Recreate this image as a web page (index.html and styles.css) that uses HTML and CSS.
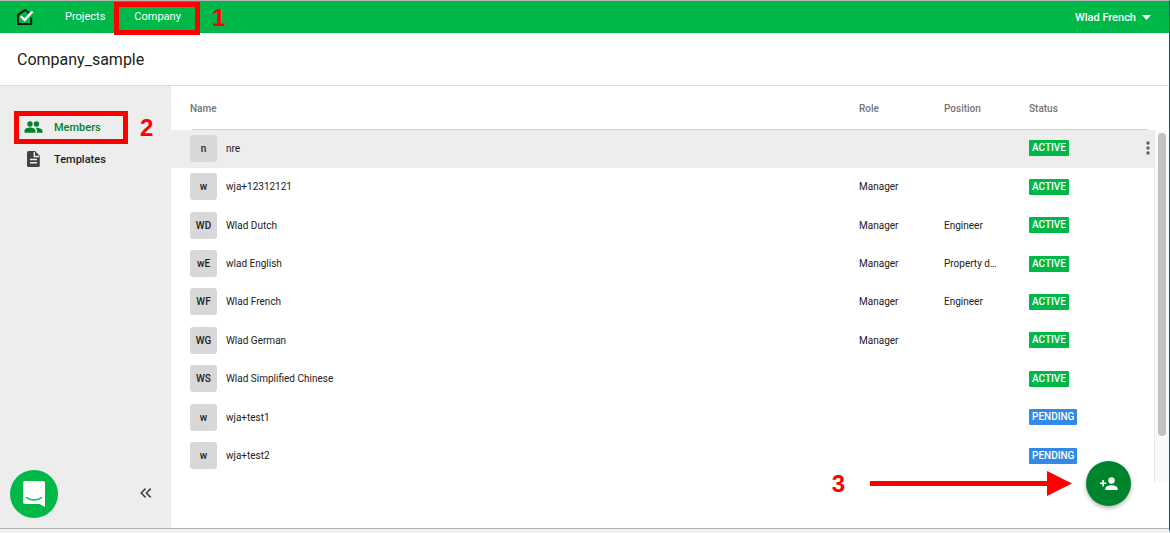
FILE: index.html
```html
<!DOCTYPE html>
<html lang="en">
<head>
    <meta charset="UTF-8" />
    <meta name="viewport" content="width=device-width, initial-scale=1.0" />
    <title>Company_sample - Members</title>
    <link rel="stylesheet" href="styles.css">
</head>
<body>
    <header class="topbar">
        <a class="logo" href="#" aria-label="Home">
            <svg width="18" height="18" viewBox="0 0 18 18" fill="none">
                <path d="M13 5 9.200 2 2 6.800V16H15.200V9.500" stroke="#0b1a10" stroke-width="2" />
                <path d="M4.800 8.300 8.600 12 16.500 3.500" stroke="#fff" stroke-width="2.300" />
            </svg>
        </a>
        <nav class="topnav">
            <a href="#">Projects</a>
            <a class="marked" href="#">Company<span class="step">1</span></a>
        </nav>
        <button class="user-menu" type="button">
            Wlad French
            <svg width="9" height="5" viewBox="0 0 9 5"><path d="M0 0H9L4.500 5Z" fill="#fff" /></svg>
        </button>
    </header>

    <div class="company-bar">
        <h1>Company_sample</h1>
    </div>

    <div class="content">
        <aside class="sidebar">
            <nav class="sidenav">
                <a class="active marked" href="#">
                    <svg width="24" height="18" viewBox="0 0 24 18" fill="currentColor">
                        <circle cx="8" cy="6" r="2.700" />
                        <circle cx="14.500" cy="6" r="2.700" />
                        <path d="M2.500 14.800v-2c0-2 3.400-3.200 5.500-3.200s5.500 1.200 5.500 3.200v2z" />
                        <path d="M14.200 9.700c2.600.1 6.300 1.200 6.300 3.100v2h-5.500v-2c0-1.300-.5-2.300-1.400-3z" />
                    </svg>
                    Members
                    <span class="step">2</span>
                </a>
                <a href="#">
                    <svg width="24" height="18" viewBox="0 0 24 18">
                        <path d="M6.500 1h6.500l4.800 4.800V15.500a1.500 1.500 0 0 1-1.500 1.500H6.500a1.500 1.500 0 0 1-1.500-1.500V2.500A1.500 1.500 0 0 1 6.500 1z" fill="#424242" />
                        <path d="M12.300 2v4.500H17M8 9.500h7M8 12.800h7" stroke="#ededed" stroke-width="1.400" fill="none" />
                    </svg>
                    Templates
                </a>
            </nav>
            <div class="sidebar-bottom">
                <button class="chat" type="button" aria-label="Open chat">
                    <svg width="24" height="28" viewBox="0 0 24 28">
                        <path d="M3 1H21a2 2 0 0 1 2 2V27L17.500 24H3a2 2 0 0 1-2-2V3a2 2 0 0 1 2-2z" fill="#fff" />
                        <path d="M4.500 17.500c4 3.400 11 3.400 15 0" stroke="#00b848" stroke-width="1.500" stroke-linecap="round" fill="none" />
                    </svg>
                </button>
                <button class="collapse" type="button" aria-label="Collapse sidebar">
                    <svg width="12" height="10" viewBox="0 0 12 10"><path d="M5.500 .6 1.200 5l4.300 4.400M10.700 .6 6.400 5l4.300 4.400" stroke="#424242" stroke-width="1.600" fill="none" /></svg>
                </button>
            </div>
        </aside>

        <main class="members">
            <table>
                <thead>
                    <tr>
                        <th class="col-name">Name</th>
                        <th class="col-role">Role</th>
                        <th class="col-position">Position</th>
                        <th class="col-status">Status</th>
                        <th class="col-menu"></th>
                    </tr>
                </thead>
                <tbody>
                    <tr class="hovered">
                        <td><div class="member"><span class="avatar">n</span>nre</div></td>
                        <td></td>
                        <td></td>
                        <td><span class="badge">ACTIVE</span></td>
                        <td>
                            <button class="more" type="button" aria-label="More">
                                <svg width="4" height="14" viewBox="0 0 4 14" fill="#616161"><circle cx="2" cy="2" r="1.700" /><circle cx="2" cy="7" r="1.700" /><circle cx="2" cy="12" r="1.700" /></svg>
                            </button>
                        </td>
                    </tr>
                    <tr>
                        <td><div class="member"><span class="avatar">w</span>wja+12312121</div></td>
                        <td>Manager</td>
                        <td></td>
                        <td><span class="badge">ACTIVE</span></td>
                        <td></td>
                    </tr>
                    <tr>
                        <td><div class="member"><span class="avatar">WD</span>Wlad Dutch</div></td>
                        <td>Manager</td>
                        <td>Engineer</td>
                        <td><span class="badge">ACTIVE</span></td>
                        <td></td>
                    </tr>
                    <tr>
                        <td><div class="member"><span class="avatar">wE</span>wlad English</div></td>
                        <td>Manager</td>
                        <td>Property d…</td>
                        <td><span class="badge">ACTIVE</span></td>
                        <td></td>
                    </tr>
                    <tr>
                        <td><div class="member"><span class="avatar">WF</span>Wlad French</div></td>
                        <td>Manager</td>
                        <td>Engineer</td>
                        <td><span class="badge">ACTIVE</span></td>
                        <td></td>
                    </tr>
                    <tr>
                        <td><div class="member"><span class="avatar">WG</span>Wlad German</div></td>
                        <td>Manager</td>
                        <td></td>
                        <td><span class="badge">ACTIVE</span></td>
                        <td></td>
                    </tr>
                    <tr>
                        <td><div class="member"><span class="avatar">WS</span>Wlad Simplified Chinese</div></td>
                        <td></td>
                        <td></td>
                        <td><span class="badge">ACTIVE</span></td>
                        <td></td>
                    </tr>
                    <tr>
                        <td><div class="member"><span class="avatar">w</span>wja+test1</div></td>
                        <td></td>
                        <td></td>
                        <td><span class="badge pending">PENDING</span></td>
                        <td></td>
                    </tr>
                    <tr>
                        <td><div class="member"><span class="avatar">w</span>wja+test2</div></td>
                        <td></td>
                        <td></td>
                        <td><span class="badge pending">PENDING</span></td>
                        <td></td>
                    </tr>
                </tbody>
            </table>
            <div class="scroll-track"><div class="scroll-thumb"></div></div>

            <div class="add-area">
                <span class="step">3</span>
                <svg class="arrow" width="202" height="26" viewBox="0 0 202 26" fill="#f00">
                    <path d="M0 10H177V0L202 12.500 177 25V15H0z" />
                </svg>
                <button class="add-member" type="button" aria-label="Add member">
                    <svg width="20" height="16" viewBox="0 0 20 16" fill="#fff">
                        <path d="M3.300 4h1.600v2.400H7.200V8H4.900v2.400H3.300V8H1V6.400h2.300z" />
                        <circle cx="12.500" cy="4.500" r="3.200" />
                        <path d="M6.300 14v-1.600c0-2.100 4.100-3.200 6.200-3.200s6.200 1.100 6.200 3.200V14z" />
                    </svg>
                </button>
            </div>
        </main>
    </div>
</body>
</html>
```
FILE: styles.css
```css
* {
    box-sizing: border-box;
}

body {
    margin: 0;
    min-height: 100vh;
    display: flex;
    flex-direction: column;
    font-family: Roboto, sans-serif;
    font-size: 11px;
    color: #212121;
    background-color: #fff;
    border-top: 1px solid #b5b5b5;
    border-right: 1px solid #2d4a7a;
    border-bottom: 4px solid #f1f0f1;
}

a {
    color: inherit;
    text-decoration: none;
}

button {
    font: inherit;
    color: inherit;
    background: none;
    border: 0;
    padding: 0;
}

svg {
    display: block;
    flex-shrink: 0;
}

.topbar {
    display: flex;
    align-items: center;
    height: 32px;
    padding: 0 18px 0 16px;
    background-color: #00b848;
    color: #fff;
}

.topnav {
    display: flex;
    align-self: stretch;
    gap: 9px;
    margin-left: 31px;
}

.topnav a {
    display: flex;
    align-items: center;
    padding-bottom: 1px;
}

.topnav .marked {
    padding-left: 20px;
    padding-right: 19px;
}

.user-menu {
    display: flex;
    align-items: center;
    gap: 6px;
    margin-left: auto;
    font-weight: 500;
}

/* red callouts of the guide */
.marked {
    position: relative;
}

.marked::before {
    content: "";
    position: absolute;
    inset: 0 0 -1px;
    border: 5px solid #f00;
}

.topnav .marked::before {
    inset: 1px 0 -2px;
}

.step {
    color: #f00;
    font: bold 24px/28px "Liberation Sans", Arial, sans-serif;
}

.marked .step {
    position: absolute;
    top: 3px;
    left: 100%;
    margin-left: 12px;
}

.company-bar {
    display: flex;
    align-items: center;
    height: 53px;
    padding-left: 17px;
    border-bottom: 1px solid #dcdcdc;
}

.company-bar h1 {
    margin: 0;
    font-size: 16px;
    font-weight: 400;
}

.content {
    flex: 1;
    display: flex;
    border-bottom: 1px solid #b0b0b0;
}

.sidebar {
    display: flex;
    flex-direction: column;
    justify-content: space-between;
    width: 171px;
    padding: 25px 0 10px;
    background-color: #ededed;
}

.sidenav a {
    display: flex;
    align-items: center;
    gap: 8px;
    width: 114px;
    height: 32px;
    margin-left: 14px;
    padding-left: 8px;
    font-weight: 500;
}

.sidenav .active {
    color: #00832d;
}

.sidebar-bottom {
    display: flex;
    align-items: center;
    justify-content: space-between;
    padding: 0 19px 0 10px;
}

.chat {
    display: grid;
    place-items: center;
    width: 48px;
    height: 48px;
    border-radius: 50%;
    background-color: #00b848;
}

.collapse {
    padding-bottom: 3px;
}

.members {
    position: relative;
    flex: 1;
    display: flex;
    align-items: flex-start;
}

table {
    flex: 1;
    height: 390px;
    table-layout: fixed;
    border-collapse: collapse;
    font-size: 10px;
}

thead tr {
    background: linear-gradient(#d0d0d0, #d0d0d0) 21px 100% / calc(100% - 27px) 1px no-repeat;
}

th {
    height: 44px;
    padding: 0;
    font-weight: 500;
    color: #757575;
    text-align: left;
}

td {
    padding: 4px 0 6px;
}

th:first-child,
td:first-child {
    padding-left: 19px;
}

.col-role,
.col-position {
    width: 85px;
}

.col-status {
    width: 117px;
}

.col-menu {
    width: 8px;
}

.hovered {
    background-color: #ededed;
}

.member {
    display: flex;
    align-items: center;
    gap: 9px;
}

.avatar {
    display: grid;
    place-items: center;
    width: 27px;
    height: 27px;
    border-radius: 3px;
    background-color: #d8d8d8;
    font-weight: 500;
}

.badge {
    display: inline-block;
    padding: 0 3px;
    border-radius: 1px;
    background-color: #00b848;
    color: #fff;
    font-weight: 500;
    line-height: 16px;
    vertical-align: middle;
}

.badge.pending {
    background-color: #3389e6;
}

.more {
    display: block;
}

.scroll-track {
    width: 15px;
    height: 352px;
    margin-top: 44px;
    padding: 3px;
    border-left: 1px solid #e6e6e6;
    background-color: #fafafa;
}

.scroll-thumb {
    width: 8px;
    height: 303px;
    border-radius: 4px;
    background-color: #c1c1c1;
}

.add-area {
    position: absolute;
    right: 38px;
    bottom: 22px;
    display: flex;
    align-items: center;
}

.arrow {
    margin: 0 14px 0 25px;
}

.add-member {
    display: grid;
    place-items: center;
    width: 45px;
    height: 45px;
    border-radius: 50%;
    background-color: #00832d;
    box-shadow: 0 2px 4px rgba(0, 0, 0, 0.3);
}
```
